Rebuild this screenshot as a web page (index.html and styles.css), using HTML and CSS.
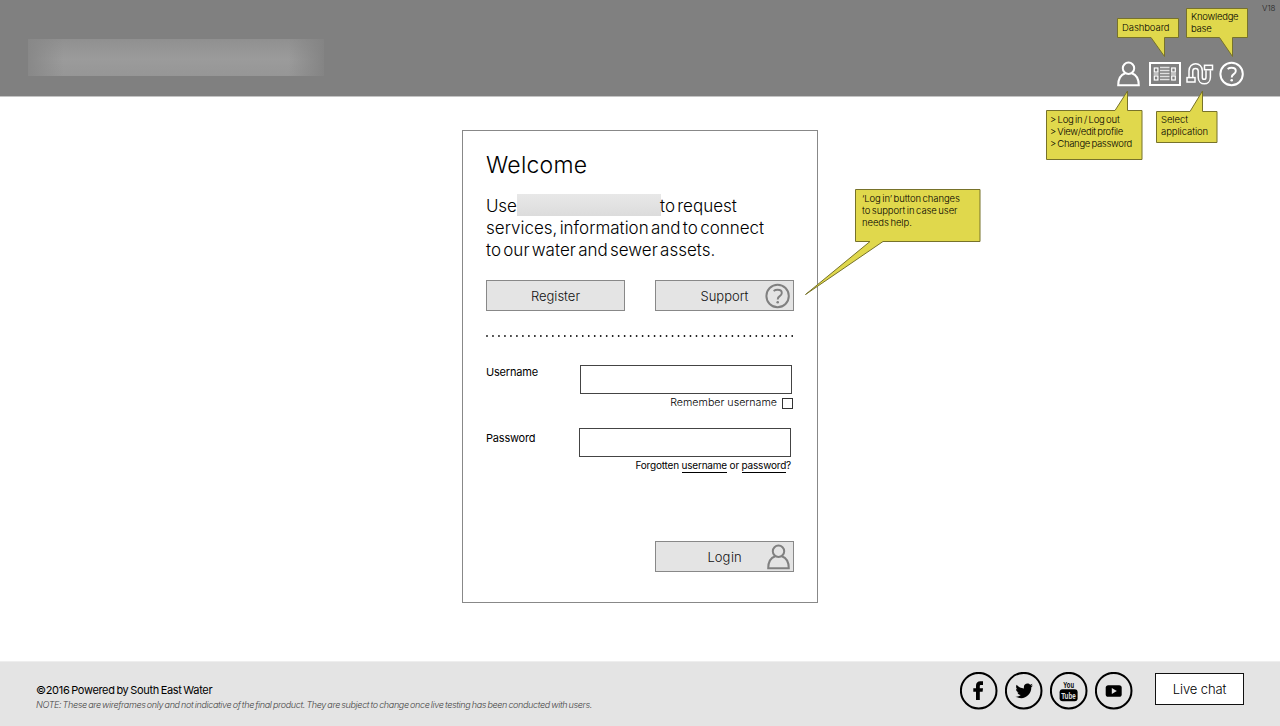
FILE: index.html
```html
<!DOCTYPE html>
<html lang="en">
<head>
<meta charset="utf-8">
<title>Welcome</title>
<link rel="stylesheet" href="styles.css">
</head>
<body>
<svg class="defs" width="0" height="0">
  <symbol id="user" viewBox="0 0 24 26"><g fill="none" stroke="currentColor" stroke-width="2"><circle cx="11.5" cy="7.2" r="5.7"/><path d="M8.2 12.2C4.2 13.6 1.2 18 1.2 24.2H21.8C21.8 18 18.8 13.6 14.8 12.2"/></g></symbol>
  <symbol id="help" viewBox="0 0 26 26"><circle cx="12.6" cy="13" r="11.2" fill="none" stroke="currentColor" stroke-width="2"/><path d="M8.6 8Q10.3 6.8 12.6 6.8Q16.8 6.8 16.8 10Q16.8 11.7 14.7 13.1Q12.7 14.4 12.7 16.4" fill="none" stroke="currentColor" stroke-width="1.9"/><circle cx="12.7" cy="19.3" r="1.3" fill="currentColor"/></symbol>
</svg>
<div class="page">
  <header class="header">
    <div class="brand"></div>
    <nav class="tools">
      <svg class="tool-user"><use href="#user"/></svg>
      <svg class="tool-dash" viewBox="0 0 32 24"><g fill="none" stroke="currentColor"><rect x="1" y="1" width="30" height="22" stroke-width="2"/><g stroke-width="1.2"><rect x="5.3" y="6" width="3.6" height="4"/><rect x="5.3" y="14" width="3.6" height="4"/><rect x="22.7" y="6" width="3.6" height="4"/><rect x="22.7" y="14" width="3.6" height="4"/><path d="M4.6 12H9.5M22 12H27"/></g><path d="M11 5.5h9.5M11 8.5h9.5M11 11.5h9.5M11 14.5h9.5M11 17.5h9.5" stroke-width="1.3" opacity=".75"/></g></svg>
      <svg class="tool-route" viewBox="0 0 28 24"><g fill="none" stroke="currentColor" stroke-width="1.5"><rect x="1" y="15.6" width="8" height="4.4"/><rect x="18.5" y="3.3" width="8" height="4.4"/><path d="M3 15V9C3 -.8 16.3 -.8 16.3 9V15.2C16.3 18 20 18 20 15.2V8.2M6.8 15V9C6.8 5.5 12.2 5.5 12.2 9V15.2C12.2 24 24.4 24 24.4 15.2V8.2"/></g></svg>
      <svg class="tool-help"><use href="#help"/></svg>
    </nav>
    <span class="version">V18</span>
  </header>

  <main class="main">
    <section class="card">
      <h1 class="title">Welcome</h1>
      <div class="intro">
        <div class="intro-line"><span class="use">Use</span><span class="redacted"></span><span class="request">to request</span></div>
        <div class="intro-line">services, information and to connect</div>
        <div class="intro-line">to our water and sewer assets.</div>
      </div>
      <div class="actions">
        <button class="button">Register</button>
        <button class="button">Support<svg class="button-help"><use href="#help"/></svg></button>
      </div>
      <svg class="divider" viewBox="0 0 310 2"><path d="M1 1H310" stroke="#111" stroke-width="1.8" stroke-linecap="round" stroke-dasharray="0 5.985"/></svg>
      <div class="field field-user"><label class="label" for="username">Username</label><input class="input" id="username" type="text"></div>
      <div class="remember"><label for="remember">Remember username</label><input class="check" id="remember" type="checkbox"></div>
      <div class="field field-pass"><label class="label label-pass" for="password">Password</label><input class="input" id="password" type="password"></div>
      <p class="forgot">Forgotten <a class="link">username</a> or <a class="link">password</a>?</p>
      <div class="submit"><button class="button">Log in<svg class="button-user"><use href="#user"/></svg></button></div>
    </section>
  </main>

  <footer class="footer">
    <div class="legal">
      <p class="copyright">©2016 Powered by South East Water</p>
      <p class="note">NOTE: These are wireframes only and not indicative of the final product. They are subject to change once live testing has been conducted with users.</p>
    </div>
    <div class="social">
      <svg class="social-icon" viewBox="0 0 38 38"><circle class="ring" cx="18.7" cy="18.7" r="17.8"/><path d="M16 28V19.8H13.3V16.3H16V13.8C16 10.8 17.6 9.3 20.4 9.3H23V12.9H21.3C20.1 12.9 19.8 13.4 19.8 14.3V16.3H23L22.6 19.8H19.8V28Z"/></svg>
      <svg class="social-icon" viewBox="0 0 38 38"><circle class="ring" cx="18.7" cy="18.7" r="17.8"/><path d="M11.6 12.8C13.6 15.1 16 16.3 19 16.5C18.3 13.3 20.2 11.5 22.5 11.5C23.6 11.5 24.5 12 25.2 12.7L27.5 11.8L26.1 13.9L28 13.4L26.3 15.2C26.5 21.5 21.8 26.2 16.3 26.2C14.1 26.2 12.3 25.7 10.6 24.6C12.7 24.8 14.2 24.2 15.7 23.1C14 23 12.9 22 12.4 20.6H13.9C12.2 20 11.1 18.8 11 17L12.6 17.4C11 16.2 10.7 14.5 11.6 12.8Z"/></svg>
      <svg class="social-icon" viewBox="0 0 38 38"><circle class="ring" cx="18.7" cy="18.7" r="17.8"/><rect x="9.6" y="17.2" width="18" height="12" rx="3"/><text class="yt" transform="translate(13.3 15.6) scale(.62 1)">You</text><text class="yt tube" transform="translate(11.2 27.2) scale(.66 1)">Tube</text></svg>
      <svg class="social-icon" viewBox="0 0 38 38"><circle class="ring" cx="18.7" cy="18.7" r="17.8"/><rect x="10.7" y="13.2" width="16" height="11.6" rx="2.6"/><path d="M16.8 16V22L21.8 19Z" fill="#e4e4e4"/></svg>
    </div>
    <button class="chat">Live chat</button>
  </footer>

  <aside class="callout c-dash"><svg viewBox="0 0 62 40"><path d="M.5.5H61.5V19.5H47.5V38.5L34 19.5H.5Z"/></svg><p>Dashboard</p></aside>
  <aside class="callout c-know"><svg viewBox="0 0 62 50"><path d="M.5.5H61.5V29.5H46.5V48.5L33.5 29.5H.5Z"/></svg><p>Knowledge</p><p>base</p></aside>
  <aside class="callout c-login"><svg viewBox="0 0 97 70"><path d="M.5 20.5H69L81.5 1V20.5H96V69.5H.5Z"/></svg><p class="tight">&gt; Log in / Log out</p><p>&gt; View/edit profile</p><p>&gt; Change password</p></aside>
  <aside class="callout c-select"><svg viewBox="0 0 62 53"><path d="M.5 21.5H34L46.5 1V21.5H61V52.5H.5Z"/></svg><p>Select</p><p>application</p></aside>
  <aside class="callout c-support"><svg viewBox="0 0 176 107"><path d="M50.5.5H175V52.5H78L.5 105.5L65 52.5H50.5Z"/></svg><p>‘Log in’ button changes</p><p>to support in case user</p><p>needs help.</p></aside>
</div>
</body>
</html>
```
FILE: styles.css
```css
* { box-sizing: border-box; }
body { margin: 0; font-family: Inter, "Open Sans", sans-serif; font-weight: 300; color: #000; background: #fff; }
p, h1 { margin: 0; }
button, input { font: inherit; margin: 0; padding: 0; border-radius: 0; }
svg { display: block; }
.defs { position: absolute; }
.page { position: relative; width: 1280px; height: 726px; display: flex; flex-direction: column; overflow: hidden; white-space: nowrap; }

.header { height: 97px; flex: none; background: #808080; border-bottom: 1px solid #c4c4c4; display: flex; justify-content: space-between; align-items: flex-start; padding: 39px 35px 0 28px; }
.brand { width: 296px; height: 37px; background: linear-gradient(90deg, #888 0, rgba(136,136,136,0) 12%, rgba(136,136,136,0) 88%, #848484 100%), linear-gradient(#909090, #9b9b9b 55%, #969696); }
.tools { display: flex; align-items: center; color: #fff; padding-top: 22px; }
.tool-user { width: 24px; height: 26px; margin-right: 8px; }
.tool-dash { width: 32px; height: 24px; margin-right: 5px; }
.tool-route { width: 28px; height: 24px; margin-right: 5px; }
.tool-help { width: 26px; height: 26px; }
.version { position: absolute; left: 1262px; top: 3px; font-size: 8px; line-height: 11px; color: #222; }

.main { flex: 1; display: flex; justify-content: center; align-items: flex-start; padding-top: 33px; }
.card { width: 356px; height: 473px; border: 1px solid #888; padding: 18px 23px 0; display: flex; flex-direction: column; }
.title { font-size: 23px; line-height: 32px; font-weight: 300; letter-spacing: 0.25px; }
.intro { margin-top: 13px; font-size: 17px; word-spacing: -2.5px; }
.intro-line { height: 22px; line-height: 24px; display: flex; }
.redacted { width: 144px; height: 22px; background: linear-gradient(#e8e8e8, #dcdcdc); }
.use { width: 31px; letter-spacing: -0.2px; }
.request { margin-left: -1px; }
.actions { display: flex; gap: 30px; margin-top: 20px; }
.button { position: relative; width: 139px; height: 31px; background: #e4e4e4; border: 1px solid #888; font-size: 13px; line-height: 30px; color: #111; text-align: center; word-spacing: -3px; }
.button-help { position: absolute; right: 2px; top: 2px; width: 26px; height: 26px; color: #808080; }
.button-user { position: absolute; right: 2px; top: 2px; width: 24px; height: 26px; color: #808080; }
.divider { width: 310px; height: 2px; margin-top: 24px; overflow: visible; }
.field { display: flex; justify-content: space-between; }
.field-user { margin-top: 28px; padding-right: 2px; }
.field-pass { margin-top: 19px; padding-right: 3px; }
.label { font-size: 11px; line-height: 14px; font-weight: 400; letter-spacing: -0.2px; }
.label-pass { padding-top: 3px; }
.input { width: 212px; height: 29px; border: 1px solid #444; background: #fff; }
.remember { display: flex; justify-content: flex-end; align-items: center; gap: 5px; height: 11px; margin-top: 4px; padding-right: 1px; font-size: 10.7px; line-height: 10px; }
.remember label { margin-top: -2px; }
.check { appearance: none; width: 11px; height: 11px; border: 1px solid #333; background: #fff; }
.forgot { margin-top: 1px; padding-right: 3px; font-size: 10px; line-height: 14px; text-align: right; font-weight: 400; letter-spacing: -0.2px; }
.link { display: inline-block; border-bottom: 1px solid #000; }
.submit { display: flex; justify-content: flex-end; margin-top: 68px; }

.footer { height: 65px; flex: none; background: #e4e4e4; border-top: 1px solid #eee; display: flex; align-items: flex-start; padding: 10px 36px 0 36px; }
.legal { flex: 1; padding-top: 10px; }
.copyright { font-size: 11px; line-height: 16px; font-weight: 400; letter-spacing: -0.32px; word-spacing: -1px; }
.note { font-size: 9px; line-height: 14px; font-style: italic; color: #444; letter-spacing: -0.35px; word-spacing: -0.8px; }
.social { display: flex; gap: 7px; margin-right: 22px; }
.social-icon { width: 38px; height: 38px; }
.ring { fill: none; stroke: #000; stroke-width: 2; }
.yt { font-family: "Liberation Sans", sans-serif; font-size: 9.5px; font-weight: 700; }
.tube { fill: #e4e4e4; }
.chat { width: 89px; height: 32px; margin-top: 1px; background: #fff; border: 1px solid #111; font-size: 13px; letter-spacing: -0.1px; color: #000; }

.callout { position: absolute; font-size: 9.5px; line-height: 12px; color: #000; letter-spacing: -0.08px; word-spacing: -1px; }
.callout svg { position: absolute; left: 0; top: 0; width: 100%; height: 100%; fill: #e0d84c; stroke: #77722a; stroke-width: 1; }
.callout p { position: relative; }
.c-dash { left: 1117px; top: 18px; width: 62px; height: 40px; padding: 4px 0 0 5px; }
.c-know { left: 1186px; top: 8px; width: 62px; height: 50px; padding: 3px 0 0 5px; letter-spacing: -0.25px; }
.c-login { left: 1046px; top: 90px; width: 97px; height: 70px; padding: 24px 0 0 4px; letter-spacing: -0.3px; }
.callout .tight { letter-spacing: -0.2px; }
.c-select { left: 1156px; top: 90px; width: 62px; height: 53px; padding: 24px 0 0 5px; }
.c-support { left: 804.5px; top: 189px; width: 176px; height: 107px; padding: 4px 0 0 57.5px; }
```
